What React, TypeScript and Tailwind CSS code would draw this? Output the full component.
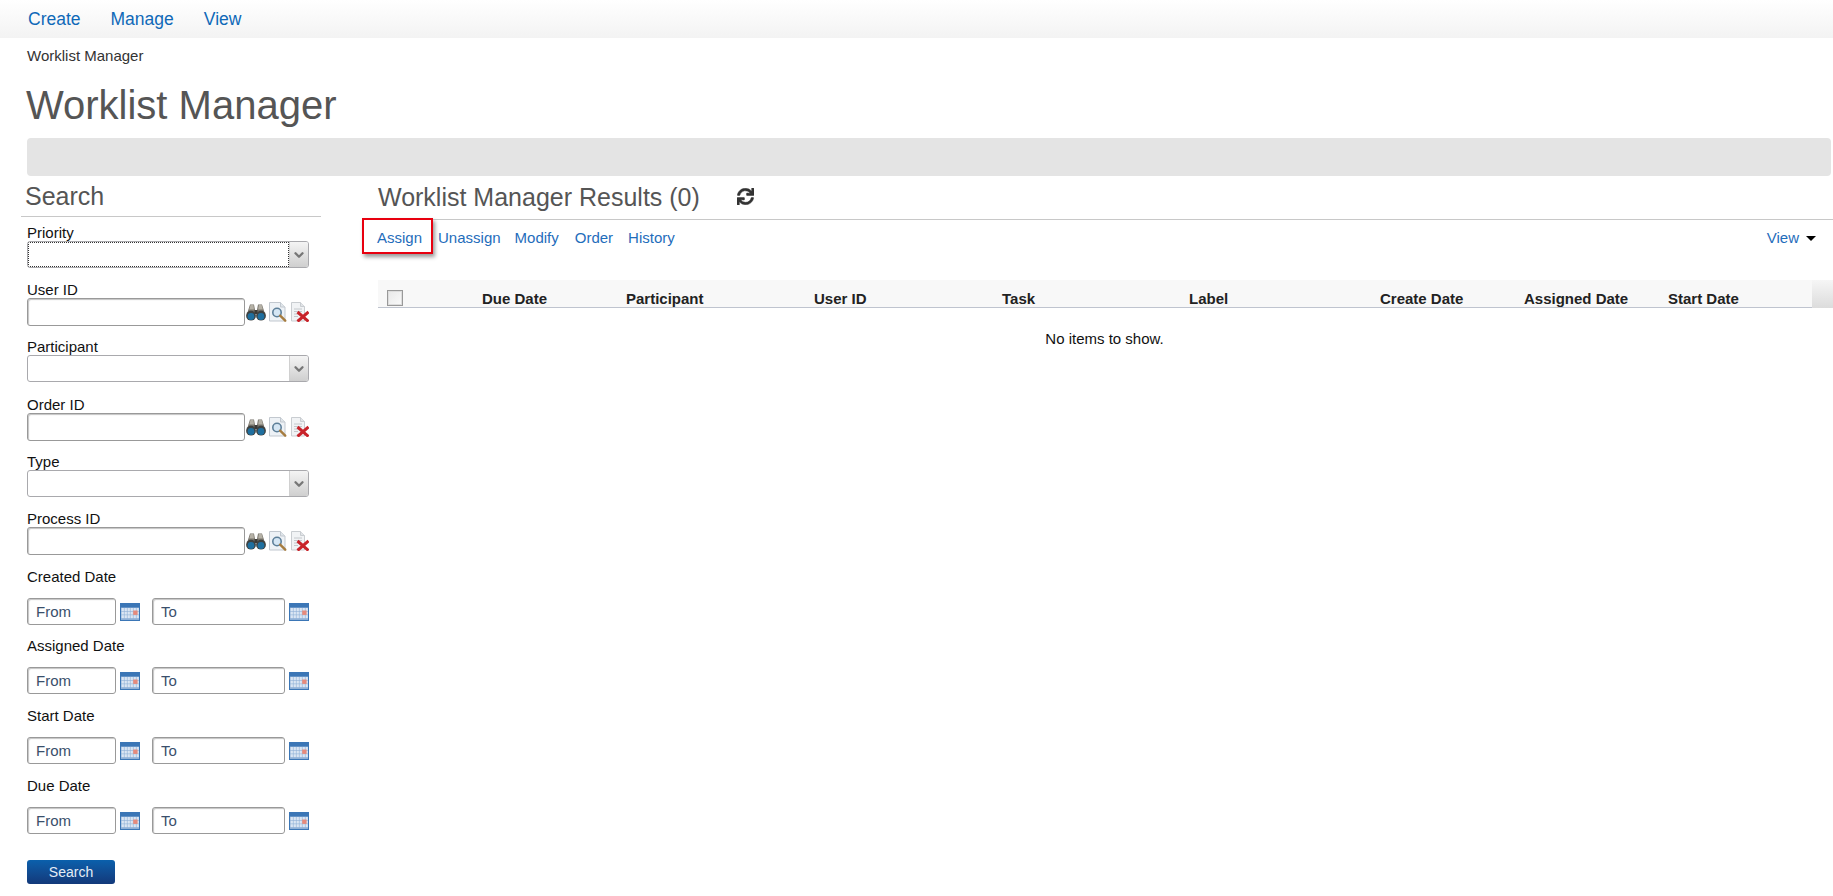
import { ChevronDown } from 'lucide-react';
import { FaSync } from 'react-icons/fa';

const columns = [
  { label: 'Due Date', className: 'w-[144px]' },
  { label: 'Participant', className: 'w-[188px]' },
  { label: 'User ID', className: 'w-[188px]' },
  { label: 'Task', className: 'w-[187px]' },
  { label: 'Label', className: 'w-[191px]' },
  { label: 'Create Date', className: 'w-[144px]' },
  { label: 'Assigned Date', className: 'w-[144px]' },
  { label: 'Start Date', className: 'w-[144px]' },
];

function Binoculars() {
  return (
    <svg width="20" height="17" viewBox="0 0 20 17">
      <path d="M4 .5h4l1 5.500h2l1-5.500h4l3 9.500H1z" fill="#77736a" />
      <path d="M4.500 1h3l.5 4.500H3.200z" fill="#b5b1a6" />
      <path d="M12.800 1h2.900l1.200 4.500H12.200z" fill="#b5b1a6" />
      <rect x="8.500" y="6" width="3" height="4" fill="#3c3a36" />
      <circle cx="5" cy="11.700" r="4.900" fill="#3e4140" />
      <circle cx="15" cy="11.700" r="4.900" fill="#3e4140" />
      <circle cx="5" cy="12.500" r="3.400" fill="#1f6f9f" />
      <circle cx="15" cy="12.500" r="3.400" fill="#1f6f9f" />
    </svg>
  );
}

function DocSearch() {
  return (
    <svg width="18" height="20" viewBox="0 0 18 20">
      <path d="M.5.5h11l4.500 4.500v14H.5z" fill="#eef2f6" stroke="#c2c8cf" />
      <path d="M11.500.5v4.500H16" fill="#dfe5ea" stroke="#c2c8cf" />
      <circle cx="8" cy="10.500" r="4.200" fill="#d5e6f4" stroke="#5d7f99" strokeWidth="1.600" />
      <path d="M11.200 13.700l5 5" stroke="#a67c3f" strokeWidth="2.400" strokeLinecap="round" />
    </svg>
  );
}

function DocDelete() {
  return (
    <svg width="18" height="20" viewBox="0 0 18 20" className="ml-[1px]">
      <path d="M.5.500h9l4 4v14.500H.5z" fill="#f1f3f5" stroke="#c9cdd1" />
      <path d="M9.500.500v4h4" fill="#e1e4e7" stroke="#c9cdd1" />
      <path d="M3 7h8M3 9.500h8M3 12h5M3 14.500h4" stroke="#c4c8cc" />
      <path d="M6.500 10l11 9.500M17.500 10l-11 9.500" stroke="#c8232a" strokeWidth="3" />
    </svg>
  );
}

function CalendarIcon() {
  const cells = [];
  for (let row = 0; row < 3; row++) {
    for (let col = 0; col < 6; col++) {
      cells.push(<rect key={`${row}-${col}`} x={1.5 + col * 3} y={5 + row * 3.6} width="2.400" height="3" fill="#dbe6f3" />);
    }
  }
  return (
    <svg width="20" height="18" viewBox="0 0 20 18">
      <rect width="20" height="18" fill="#3b76b6" />
      <rect x="1" y="4.500" width="18" height="12.500" fill="#8fb0d6" />
      {cells}
      <rect x="13.200" y="7.500" width="4.400" height="4.400" fill="#e58a7c" />
    </svg>
  );
}

function SelectBox({ focused }: { focused?: boolean }) {
  return (
    <div className="flex w-[282px] h-[27px] rounded-[3px] border border-[#a9a9ad] bg-white overflow-hidden">
      <div className={focused ? 'flex-1 border border-dotted border-[#333]' : 'flex-1'} />
      <div className="w-[19px] flex items-center justify-center border-l border-[#d0d0d0] bg-gradient-to-b from-[#f4f4f4] to-[#cfcfcf]">
        <ChevronDown size={14} strokeWidth={4} className="text-[#777]" />
      </div>
    </div>
  );
}

function LookupInput() {
  return (
    <div className="flex items-center">
      <input type="text" className="w-[218px] h-[28px] rounded-[3px] border border-[#999] bg-white shadow-[inset_1px_1px_1px_#c4c4c4] outline-none" />
      <div className="ml-[1px] flex items-center gap-[3px]">
        <Binoculars />
        <DocSearch />
        <DocDelete />
      </div>
    </div>
  );
}

function DateInput({ placeholder, className }: { placeholder: string; className: string }) {
  return (
    <input
      type="text"
      placeholder={placeholder}
      className={`${className} h-[27px] pl-[8px] rounded-[3px] border border-[#999] bg-white text-[15px] shadow-[inset_1px_1px_1px_#c4c4c4] outline-none placeholder:text-[#3a4f6b]`}
    />
  );
}

function DateRange({ label, className }: { label: string; className: string }) {
  return (
    <div className={className}>
      <div className="h-[17px] leading-[17px] text-[15px] text-[#111]">{label}</div>
      <div className="mt-[13px] flex items-center">
        <DateInput placeholder="From" className="w-[89px]" />
        <div className="ml-[4px]"><CalendarIcon /></div>
        <DateInput placeholder="To" className="ml-[12px] w-[133px]" />
        <div className="ml-[4px]"><CalendarIcon /></div>
      </div>
    </div>
  );
}

function Label({ text }: { text: string }) {
  return <div className="h-[17px] leading-[17px] text-[15px] text-[#111]">{text}</div>;
}

export default function App() {
  return (
    <div className="min-h-[896px] bg-white font-['Liberation_Sans',Arial,sans-serif] overflow-hidden">
      {/* Top nav */}
      <div className="h-[38px] flex items-center gap-[30px] pl-[28px] bg-gradient-to-b from-white to-[#f3f3f3] text-[17.500px] text-[#0f69b8]">
        <a>Create</a>
        <a>Manage</a>
        <a>View</a>
      </div>

      <div className="h-[36px] pl-[27px] leading-[36px] text-[15px] text-[#333]">Worklist Manager</div>
      <h1 className="h-[54px] pl-[26px] leading-[62px] text-[40px] text-[#555]">Worklist Manager</h1>
      <div className="ml-[27px] mr-[2px] mt-[10px] h-[38px] rounded-[4px] bg-[#e4e4e4]" />

      <div className="flex">
        {/* Search panel */}
        <div className="ml-[21px] w-[300px] shrink-0">
          <div className="h-[41px] pl-[4px] pt-[1px] leading-[38px] text-[25px] text-[#555] border-b border-[#c8c8c8]">Search</div>
          <div className="pl-[6px]">
            <div className="mt-[7px]">
              <Label text="Priority" />
              <SelectBox focused />
            </div>
            <div className="mt-[13px]">
              <Label text="User ID" />
              <LookupInput />
            </div>
            <div className="mt-[12px]">
              <Label text="Participant" />
              <SelectBox />
            </div>
            <div className="mt-[14px]">
              <Label text="Order ID" />
              <LookupInput />
            </div>
            <div className="mt-[12px]">
              <Label text="Type" />
              <SelectBox />
            </div>
            <div className="mt-[13px]">
              <Label text="Process ID" />
              <LookupInput />
            </div>
            <DateRange label="Created Date" className="mt-[13px]" />
            <DateRange label="Assigned Date" className="mt-[12px]" />
            <DateRange label="Start Date" className="mt-[13px]" />
            <DateRange label="Due Date" className="mt-[13px]" />
            <button className="mt-[26px] block w-[88px] h-[24px] rounded-[3px] bg-gradient-to-b from-[#0a60ac] to-[#12397a] text-[14px] text-[#e4edf6]">
              Search
            </button>
          </div>
        </div>

        {/* Results */}
        <div className="ml-[57px] flex-1">
          <div className="h-[44px] pt-[1px] leading-[40px] text-[25px] text-[#555] border-b border-[#c8c8c8] flex">
            Worklist Manager Results (0)
            <FaSync size={17} stroke="currentColor" strokeWidth={16} className="ml-[37px] mt-[11px] text-[#333]" />
          </div>
          <div className="h-[36px] flex items-center text-[15px] text-[#1f6dbb]">
            <a className="relative ml-[-1px]">
              Assign
              <span className="absolute left-[-15px] top-[-9px] w-[71px] h-[36px] border-2 border-[#e8000f] shadow-[2px_3px_4px_#999]" />
            </a>
            <a className="ml-[16px]">Unassign</a>
            <a className="ml-[14px]">Modify</a>
            <a className="ml-[16px]">Order</a>
            <a className="ml-[15px]">History</a>
            <a className="ml-auto">View</a>
            <span className="ml-[7px] mr-[17px] border-x-[5px] border-t-[5px] border-x-transparent border-t-black" />
          </div>

          {/* Table */}
          <div className="mt-[24px] flex h-[28px]">
            <div className="flex-1 flex items-end bg-[#f8f8f8] border-b border-[#bfc4cf] text-[15px] leading-[17px] font-bold text-[#222]">
              <div className="w-[104px] pl-[9px]">
                <div className="mb-[1px] w-[16px] h-[16px] border border-[#999] bg-gradient-to-br from-[#e8e8e8] to-[#fafafa] shadow-[inset_0_0_0_1px_#ddd]" />
              </div>
              {columns.map((col) => (
                <div key={col.label} className={col.className}>{col.label}</div>
              ))}
            </div>
            <div className="w-[21px] bg-gradient-to-b from-[#f6f6f6] to-[#dcdcdc]" />
          </div>
          <div className="mt-[22px] pr-[2px] text-center text-[15px] text-[#111] leading-[17px]">No items to show.</div>
        </div>
      </div>
    </div>
  );
}
